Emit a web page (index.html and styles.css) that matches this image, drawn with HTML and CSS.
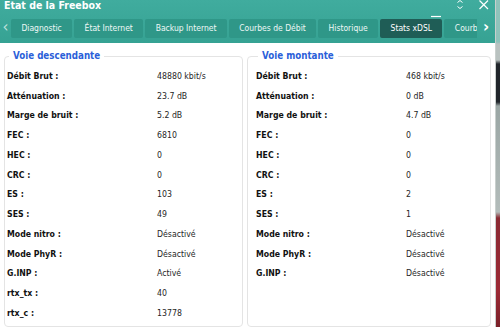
FILE: index.html
```html
<!DOCTYPE html>
<html lang="fr">
<head>
<meta charset="utf-8">
<title>Etat de la Freebox</title>
<link rel="stylesheet" href="styles.css">
</head>
<body>
<div class="screen">
  <div class="window">
    <header class="titlebar">
      <div class="title-row">
        <span class="title">Etat de la Freebox</span>
        <div class="controls">
          <svg class="ctl ctl-min" width="12" height="20" viewBox="0 0 12 20"><path d="M1 16.5H11" stroke="#fff" stroke-width="1.2"/></svg>
          <svg class="ctl ctl-max" width="10" height="20" viewBox="0 0 10 20"><path d="M2.5 2.5L5 0.5L7.5 2.5M2.5 6.5L5 8.5L7.5 6.5" stroke="#fff" stroke-width="1" fill="none"/></svg>
          <svg class="ctl ctl-close" width="12" height="20" viewBox="0 0 12 20"><path d="M1.5 0.5L10 9M10 0.5L1.5 9" stroke="#fff" stroke-width="1.2"/></svg>
        </div>
      </div>
      <nav class="tabbar">
        <span class="arrow arrow-left">&#8249;</span>
        <div class="tabs">
          <span class="tab">Diagnostic</span>
          <span class="tab">État Internet</span>
          <span class="tab">Backup Internet</span>
          <span class="tab">Courbes de Débit</span>
          <span class="tab">Historique</span>
          <span class="tab active">Stats xDSL</span>
          <span class="tab tab-cut">Courbes de Débit</span>
        </div>
        <span class="arrow arrow-right">&#8250;</span>
      </nav>
    </header>
    <main class="content">
      <fieldset class="panel panel-down">
        <legend>Voie descendante</legend>
        <dl class="stats">
          <dt>Débit Brut :</dt><dd>48880 kbit/s</dd>
          <dt>Atténuation :</dt><dd>23.7 dB</dd>
          <dt>Marge de bruit :</dt><dd>5.2 dB</dd>
          <dt>FEC :</dt><dd>6810</dd>
          <dt>HEC :</dt><dd>0</dd>
          <dt>CRC :</dt><dd>0</dd>
          <dt>ES :</dt><dd>103</dd>
          <dt>SES :</dt><dd>49</dd>
          <dt>Mode nitro :</dt><dd>Désactivé</dd>
          <dt>Mode PhyR :</dt><dd>Désactivé</dd>
          <dt>G.INP :</dt><dd>Activé</dd>
          <dt>rtx_tx :</dt><dd>40</dd>
          <dt>rtx_c :</dt><dd>13778</dd>
        </dl>
      </fieldset>
      <fieldset class="panel panel-up">
        <legend>Voie montante</legend>
        <dl class="stats">
          <dt>Débit Brut :</dt><dd>468 kbit/s</dd>
          <dt>Atténuation :</dt><dd>0 dB</dd>
          <dt>Marge de bruit :</dt><dd>4.7 dB</dd>
          <dt>FEC :</dt><dd>0</dd>
          <dt>HEC :</dt><dd>0</dd>
          <dt>CRC :</dt><dd>0</dd>
          <dt>ES :</dt><dd>2</dd>
          <dt>SES :</dt><dd>1</dd>
          <dt>Mode nitro :</dt><dd>Désactivé</dd>
          <dt>Mode PhyR :</dt><dd>Désactivé</dd>
          <dt>G.INP :</dt><dd>Désactivé</dd>
        </dl>
      </fieldset>
    </main>
  </div>
  <div class="desktop-strip"></div>
</div>
</body>
</html>
```

FILE: styles.css
```css
* { box-sizing: border-box; }
html, body { margin: 0; padding: 0; }
body {
  width: 500px;
  height: 327px;
  overflow: hidden;
  font-family: "DejaVu Sans Condensed", "DejaVu Sans", Verdana, sans-serif;
  font-stretch: semi-condensed;
  background: #fff;
}
.screen {
  display: flex;
  width: 500px;
  height: 327px;
}
.window {
  width: 496px;
  height: 327px;
  display: flex;
  flex-direction: column;
  border-right: 1px solid #c9cfcd;
  overflow: hidden;
}
.desktop-strip {
  flex: 1;
  background: linear-gradient(#8fc3bb 0, #8fc3bb 42px, #b9c2c0 44px, #b9c2c0 60px, #20252a 64px, #20252a 102px, #9aa6a4 106px, #b3bcba 212px, #8a2a33 218px, #9c2a35 290px, #7a2129 327px);
}
.titlebar {
  height: 43px;
  background: linear-gradient(#40ac9e, #36a293);
  display: flex;
  flex-direction: column;
}
.title-row {
  height: 19px;
  display: flex;
  align-items: flex-start;
  justify-content: space-between;
}
.title {
  color: #fff;
  font-weight: bold;
  font-size: 10.5px;
  line-height: 10px;
  padding-left: 4px;
}
.controls {
  display: flex;
  align-items: flex-start;
  gap: 13px;
  padding-right: 5px;
}
.ctl { display: block; }
.tabbar {
  height: 19px;
  display: flex;
  align-items: stretch;
}
.arrow {
  flex: none;
  font-family: "DejaVu Sans", sans-serif;
  font-stretch: normal;
  text-align: center;
}
.arrow-left {
  width: 11px;
  color: #bfe3de;
  font-size: 15px;
  line-height: 17px;
}
.arrow-right {
  width: 18px;
  color: #fff;
  font-size: 15px;
  font-weight: bold;
  line-height: 17px;
}
.tabs {
  flex: 1;
  display: flex;
  gap: 2px;
  overflow: hidden;
}
.tab {
  flex: none;
  background: #2f9788;
  color: #eef8f6;
  font-size: 8.5px;
  line-height: 19px;
  padding: 0 10.4px;
  border-radius: 2px;
  white-space: nowrap;
}
.tab-cut {
  flex: 1 1 0;
  min-width: 0;
  overflow: hidden;
  padding-right: 0;
  border-radius: 2px 0 0 2px;
}
.tab.active { background: #1f5d56; color: #fff; }
.content {
  flex: 1;
  display: flex;
  gap: 4px;
  padding: 7px 4px 0 4px;
}
.panel {
  margin: 0;
  border: 1px solid #e4e4e4;
  border-radius: 4px;
  padding: 0 0 0 2px;
  min-width: 0;
}
.panel-down { width: 239px; }
.panel-up { flex: 1; padding-left: 8px; }
legend {
  color: #2b5fd9;
  font-weight: bold;
  font-size: 9.7px;
  line-height: 12px;
  padding: 0 4px;
  margin-left: 2px;
}
.stats {
  margin: 4px 0 0 0;
  display: grid;
  grid-template-columns: 150px 1fr;
  grid-auto-rows: 19.75px;
  align-items: center;
}
.stats dt {
  font-weight: bold;
  font-size: 8.7px;
  color: #111;
}
.stats dd {
  margin: 0;
  font-size: 8.7px;
  color: #262626;
}
```
